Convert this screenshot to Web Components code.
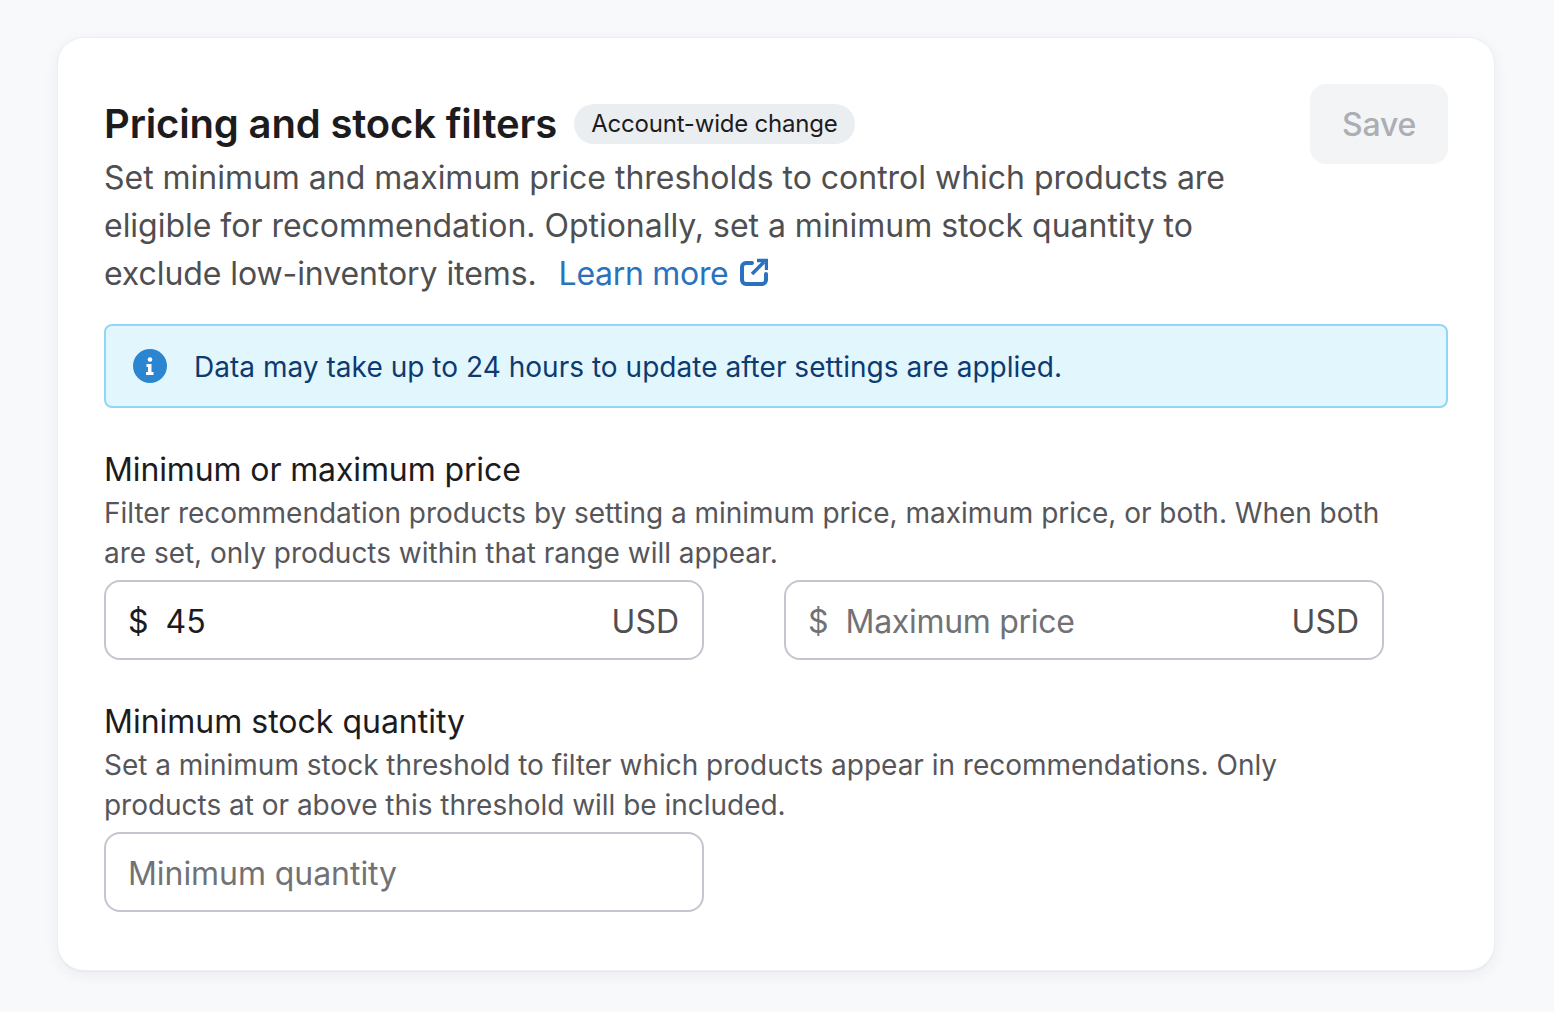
<!DOCTYPE html>
<html>
<head>
<meta charset="utf-8">
<title>Pricing and stock filters</title>
<style>
html, body { margin: 0; height: 100%; }
body {
	background: #f8f9fb;
	font-family: Inter, "Noto Sans", sans-serif;
	color: #1c1c1e;
}
</style>
</head>
<body>
<filter-card>
	<span slot="title">Pricing and stock filters</span>
	<span slot="badge">Account-wide change</span>
	<span slot="description">Set minimum and maximum price thresholds to control which products are eligible for recommendation. Optionally, set a minimum stock quantity to</span>
	<span slot="tail" style="letter-spacing:-.08px">exclude low-inventory items.</span>
	<info-banner>Data may take up to 24 hours to update after settings are applied.</info-banner>
	<form-section label="Minimum or maximum price" help="Filter recommendation products by setting a minimum price, maximum price, or both. When both are set, only products within that range will appear." style="--label-spacing:-.12px">
		<div style="display:flex;gap:80px">
			<text-field prefix="$" value="45" suffix="USD"></text-field>
			<text-field prefix="$" placeholder="Maximum price" suffix="USD" style="--value-spacing:-.3px"></text-field>
		</div>
	</form-section>
	<form-section label="Minimum stock quantity" help="Set a minimum stock threshold to filter which products appear in recommendations. Only products at or above this threshold will be included." style="margin-top:38px">
		<text-field placeholder="Minimum quantity" style="--value-spacing:-.06px"></text-field>
	</form-section>
</filter-card>
<script>
class FilterCard extends HTMLElement {
	constructor() {
		super();
		this.shadow = this.attachShadow({mode: 'open'});
	}
	connectedCallback() {
		this.shadow.innerHTML = `
<style>
:host {
	display: block;
	box-sizing: border-box;
	width: 1436px;
	height: 932px;
	margin: 38px 0 0 58px;
	padding: 46px 46px 0 46px;
	background: #fff;
	border-radius: 26px;
	box-shadow: 0 0 0 1px #eceef1, 0 2px 1px #e6e8ec, 0 4px 16px rgba(30, 40, 70, .07);
}
.head { display: flex; justify-content: space-between; align-items: flex-start; }
.text { width: 1150px; }
.title-row { display: flex; align-items: center; gap: 17px; height: 80px; margin-bottom: -10px; }
.title { font-size: 40px; line-height: 48px; font-weight: 600; color: #1c1c1e; letter-spacing: -.16px; }
.badge { font-size: 24px; line-height: 40px; height: 40px; padding: 0 17px; background: #ebeef1; color: #1c1c1e; border-radius: 20px; letter-spacing: -.2px; }
.desc { font-size: 32px; line-height: 48px; color: #4f4f52; letter-spacing: -.02px; }
.desc a { color: #2a72bd; text-decoration: none; margin-left: 13px; white-space: nowrap; letter-spacing: -.3px; }
.desc svg { width: 28px; height: 28px; vertical-align: -1px; margin-left: 12px; }
button {
	width: 138px; height: 80px; border: 0; border-radius: 16px;
	background: #f3f4f6; color: #acaeb3; font: 500 32px Inter, sans-serif; letter-spacing: -.2px;
}
</style>
<div class="head">
	<div class="text">
		<div class="title-row">
			<div class="title"><slot name="title"></slot></div>
			<div class="badge"><slot name="badge"></slot></div>
		</div>
		<div class="desc"><slot name="description"></slot> <slot name="tail"></slot> <a href="#">Learn more<svg viewBox="0 0 28 28" fill="none" stroke="#2a72bd" stroke-width="4"><path d="M12 5H6a4 4 0 0 0-4 4v13a4 4 0 0 0 4 4h16a4 4 0 0 0 4-4v-6" stroke-linecap="round"/><path d="M12 16 24 4" stroke-width="3.600"/><path d="M17 2.500h9.500V12" stroke-width="3.400"/></svg></a></div>
	</div>
	<button disabled>Save</button>
</div>
<slot></slot>
`;
	}
}
class InfoBanner extends HTMLElement {
	constructor() {
		super();
		this.shadow = this.attachShadow({mode: 'open'});
	}
	connectedCallback() {
		this.shadow.innerHTML = `
<style>
:host {
	display: flex;
	align-items: center;
	gap: 28px;
	box-sizing: border-box;
	height: 84px;
	margin: 26px 0 38px;
	padding: 0 27px;
	background: #e2f6fe;
	border: 2px solid #92d5f6;
	border-radius: 8px;
	font-size: 28px;
	letter-spacing: .03px;
	color: #0d3b70;
}
svg { width: 34px; height: 34px; flex: none; }
span { padding-top: 2px; margin-left: -1px; }
</style>
<svg viewBox="0 0 34 34"><circle cx="17" cy="17" r="17" fill="#2b85d0"/><circle cx="17" cy="10.500" r="2.300" fill="#fff"/><path d="M13.500 15h5v8h2v3h-7.500v-3h2v-5h-1.500z" fill="#fff"/></svg>
<span><slot></slot></span>
`;
	}
}
class FormSection extends HTMLElement {
	constructor() {
		super();
		this.shadow = this.attachShadow({mode: 'open'});
	}
	connectedCallback() {
		this.shadow.innerHTML = `
<style>
:host { display: block; }
.label { font-size: 32px; line-height: 47px; color: #1c1c1e; letter-spacing: var(--label-spacing, 0); }
.help { font-size: 28px; line-height: 40px; color: #56565a; width: 1290px; margin-bottom: 7px; letter-spacing: -.02px; }
</style>
<div class="label">${this.getAttribute('label')}</div>
<div class="help">${this.getAttribute('help')}</div>
<slot></slot>
`;
	}
}
class TextField extends HTMLElement {
	constructor() {
		super();
		this.shadow = this.attachShadow({mode: 'open'});
	}
	connectedCallback() {
		const prefix = this.getAttribute('prefix');
		const value = this.getAttribute('value');
		const suffix = this.getAttribute('suffix');
		const empty = !value;
		this.shadow.innerHTML = `
<style>
:host {
	display: flex;
	align-items: center;
	box-sizing: border-box;
	width: 600px;
	height: 80px;
	padding: 2px 23px 0 22px;
	border: 2px solid #c4c6cf;
	border-radius: 16px;
	font-size: 32px;
	color: #1c1c1e;
}
.prefix { margin-right: 18px; }
.value { flex: 1; letter-spacing: var(--value-spacing, 0); margin-left: -1px; }
.muted { color: #727276; }
.suffix { color: #4f4f52; }
</style>
${prefix ? `<span class="prefix ${empty ? 'muted' : ''}">${prefix}</span>` : ''}
<span class="value ${empty ? 'muted' : ''}" ${prefix ? '' : 'style="margin-left:0"'}>${value || this.getAttribute('placeholder')}</span>
${suffix ? `<span class="suffix">${suffix}</span>` : ''}
`;
	}
}
customElements.define('filter-card', FilterCard);
customElements.define('info-banner', InfoBanner);
customElements.define('form-section', FormSection);
customElements.define('text-field', TextField);
</script>
</body>
</html>
